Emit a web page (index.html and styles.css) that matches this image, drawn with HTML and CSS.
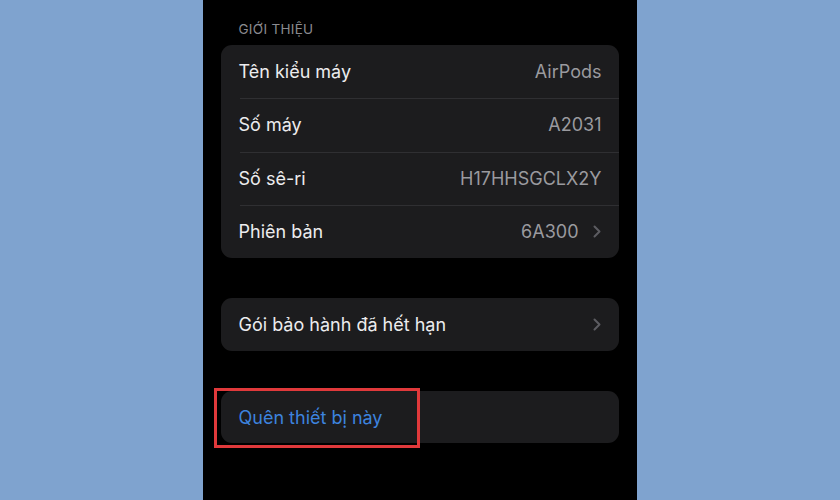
FILE: index.html
```html
<!DOCTYPE html>
<html lang="vi">
<head>
<meta charset="utf-8">
<link rel="stylesheet" href="styles.css">
</head>
<body>
<div class="screen">
  <div class="section-title">GIỚI THIỆU</div>
  <div class="card">
    <div class="row"><span class="label">Tên kiểu máy</span><span class="value">AirPods</span></div>
    <div class="row"><span class="label">Số máy</span><span class="value">A2031</span></div>
    <div class="row"><span class="label">Số sê-ri</span><span class="value">H17HHSGCLX2Y</span></div>
    <div class="row"><span class="label">Phiên bản</span><span class="value">6A300</span>
      <svg class="chev" width="8" height="13" viewBox="0 0 8 13"><path d="M1.5 1.5 L6.5 6.5 L1.5 11.5" fill="none" stroke="#5c5c61" stroke-width="2" stroke-linecap="round" stroke-linejoin="round"/></svg>
    </div>
  </div>
  <div class="card card-gap">
    <div class="row"><span class="label">Gói bảo hành đã hết hạn</span><span class="value"></span>
      <svg class="chev" width="8" height="13" viewBox="0 0 8 13"><path d="M1.5 1.5 L6.5 6.5 L1.5 11.5" fill="none" stroke="#5c5c61" stroke-width="2" stroke-linecap="round" stroke-linejoin="round"/></svg>
    </div>
  </div>
  <div class="card card-gap forget">
    <div class="row"><span class="link">Quên thiết bị này</span></div>
    <div class="highlight"></div>
  </div>
</div>
</body>
</html>
```
FILE: styles.css
```css
html, body {
  margin: 0;
  padding: 0;
}
body {
  background: #7fa3cf;
  width: 840px;
  height: 500px;
  display: flex;
  justify-content: center;
  overflow: hidden;
  font-family: Inter, "Noto Sans", "Liberation Sans", sans-serif;
}
.screen {
  width: 398px;
  height: 500px;
  margin-left: -1px;
  background: #000;
  padding: 0 18px;
}
.section-title {
  color: #8b8b90;
  font-size: 13.5px;
  line-height: 16px;
  letter-spacing: 0.3px;
  padding: 21px 0 0 18px;
  height: 24px;
}
.card {
  background: #1c1c1e;
  border-radius: 11px;
  position: relative;
}
.card-gap {
  margin-top: 40px;
}
.row {
  height: 53.25px;
  display: flex;
  align-items: center;
  padding: 0 17px 0 18px;
  position: relative;
}
.row + .row::before {
  content: "";
  position: absolute;
  left: 19px;
  right: 0;
  top: 0;
  border-top: 1px solid #2f2f32;
}
.label {
  color: #ececee;
  font-size: 18px;
  flex: 1;
}
.value {
  color: #9a9a9f;
  font-size: 18px;
}
.chev {
  margin-left: 14px;
  margin-right: 1px;
}
.forget .row {
  height: 52px;
}
.link {
  color: #3d83de;
  font-size: 18px;
}
.highlight {
  position: absolute;
  left: -7px;
  top: -3px;
  width: 200px;
  height: 54px;
  border: 3px solid #e0393b;
}
```
